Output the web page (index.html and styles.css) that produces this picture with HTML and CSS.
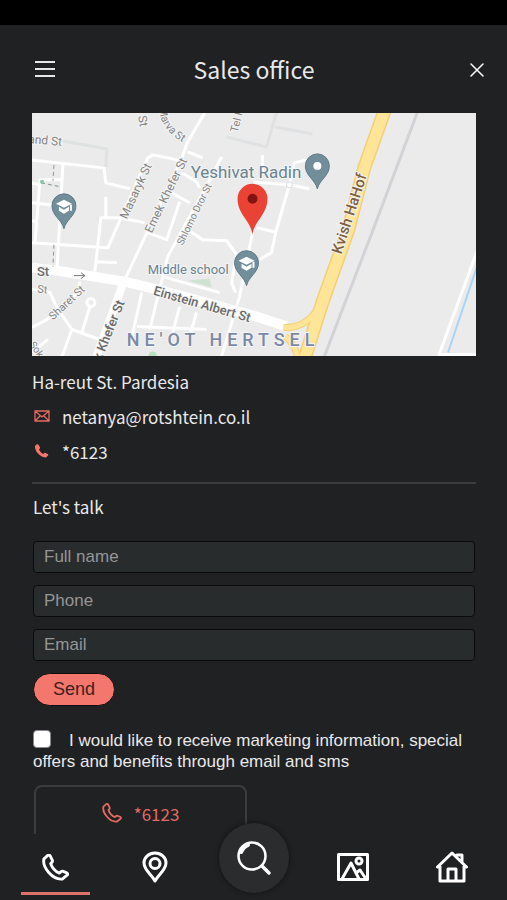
FILE: index.html
```html
<!DOCTYPE html>
<html lang="en">
<head>
  <meta charset="UTF-8" />
  <meta name="viewport" content="width=device-width, initial-scale=1.0"/>
  <title>Sales office</title>
  <link rel="stylesheet" href="styles.css">
</head>
<body>

  <div class="status-bar"></div>

  <header class="header">
    <button class="icon-btn" type="button" aria-label="Menu">
      <svg width="20" height="18" viewBox="0 0 20 18" fill="none" stroke="#e4e6e7" stroke-width="2"><path d="M0 2h20M0 9h20M0 16h20"/></svg>
    </button>
    <h1>Sales office</h1>
    <button class="icon-btn" type="button" aria-label="Close">
      <svg width="14" height="18" viewBox="0 0 14 18" fill="none" stroke="#fff" stroke-width="1.5" stroke-linecap="round"><path d="M1 4l12 12M13 4L1 16"/></svg>
    </button>
  </header>

  <main class="content">
    <!-- Map -->
    <svg class="map" viewBox="0 0 445 244" role="img" aria-label="Map of the sales office">
      <defs>
        <g id="pin"><path d="M0 23C-2 14-12 10-12 0a12 12 0 0 1 24 0C12 10 2 14 0 23z" fill="#718e9a" stroke="#5d7985"/></g>
        <g id="school">
          <use href="#pin"/>
          <path d="M-8-2L0-6 8-2 0 2z" fill="#fff"/>
          <path d="M-5 1v4l5 3 5-3V1L0 4zM6-1h2v6H6z" fill="#fff"/>
        </g>
        <path id="curve" d="M127 -5Q129 17 152 30"/>
      </defs>
      <rect width="445" height="244" fill="#ebebeb"/>
      <path d="M156 168l22-2 2 9z" fill="#cfe3d1"/>
      <circle cx="121" cy="243" r="4" fill="#b9e0bf"/>

      <g class="road-faint">
        <path d="M26 27l49 9-1 18M195 24l40 10L245 0M244 14l37 7"/>
      </g>
      <g class="road">
        <path d="M72 54l2 16 24 6M0 47l71 8M31 52l-6 105M0 70l8 2M30 67H8L3 130M0 90l28 3M0 108l4 1"/>
        <path d="M0 130l76 5 40-90 5-3 30 6M173 0l-17 29-7 19-56 119M156 39l15 6"/>
        <path d="M190 44l-9 18-45 82-18 73M150 60l15 9 3 6M138 79l20 11M148 89l-13 38-19-7"/>
        <path d="M63 159l6-54h19l25 5M74 84v20M65 149l20 1M156 117l15 10 24 1 10 14-5 28 4 10"/>
        <path d="M231 42v20M222 69l36 3 20 4M258 72l-13 45-5 23-12 7M258 72l5-22 12-3M225 115l18 4"/>
        <path d="M221 120l-13 64-18 60M131 164l57 16M110 180l-12 54M105 214l70 3M148 194l-7 26M165 200l-7 24"/>
        <path d="M48 169l-2 11-31 27-15 8M0 177l18 3 7 15 15 22 28 10M40 217l-10 27M50 220l8-26M0 240l16-13"/>
        <circle cx="59" cy="190" r="4"/>
        <path d="M450 128l-42 114h37"/>
      </g>
      <path d="M93 166l-29 80" class="road-wide"/>
      <path d="M0 155l25 3 68 11 37 9 95 26 30 10" class="road-main"/>
      <circle cx="258" cy="72" r="3" fill="#fff" stroke="#d8dadd"/>
      <path d="M22 52l-1 16M9 70l20 4M22 132l-1 22" fill="none" stroke="#86998e" stroke-dasharray="4 3"/>
      <circle cx="10" cy="69" r="2" fill="#7ccca5"/>
      <path d="M42 163h11M49 160l4 3-4 3" fill="none" stroke="#777"/>

      <path d="M386 0l-46 122-47 122" fill="none" stroke="#d2d3d6" stroke-width="3"/>
      <path d="M446 154l-29 86" fill="none" stroke="#a9d3fa" stroke-width="2"/>

      <g fill="none" stroke="#f5cf73">
        <path d="M252 215q23 1 35-20M254 224q10 8 13 24" stroke-width="7"/>
        <path d="M354-4l-21 59-16 62-26 73-19 60" stroke-width="14"/>
      </g>
      <g fill="none" stroke="#ffe597">
        <path d="M252 215q23 1 35-20M254 224q10 8 13 24" stroke-width="5"/>
        <path d="M354-4l-21 59-16 62-26 73-19 60" stroke-width="11"/>
      </g>

      <g class="street">
        <text x="-4" y="30" font-size="12" transform="rotate(5 -4 30)">and St</text>
        <text x="104" y="-9" font-size="12" transform="rotate(80 104 -9)">al St</text>
        <text font-size="11"><textPath href="#curve">Marva St</textPath></text>
        <text x="206" y="20" font-size="11" transform="rotate(-76 206 20)">Tel K</text>
        <text x="95" y="107" font-size="12" transform="rotate(-65 95 107)">Masaryk St</text>
        <text x="120" y="121" font-size="12" transform="rotate(-64 120 121)">Emek Khefer St</text>
        <text x="151" y="133" font-size="10" transform="rotate(-64 151 133)">Shlomo Dror St</text>
        <text x="21" y="208" font-size="11" transform="rotate(-43 21 208)">Sharet St</text>
        <text x="5" y="180" font-size="11" transform="rotate(5 5 180)">St</text>
        <text x="-3" y="232" font-size="10" transform="rotate(55 -3 232)">Sok</text>
      </g>
      <g class="street street-main">
        <text x="5" y="163" font-size="13">St</text>
        <text x="121" y="182" font-size="13" transform="rotate(16 121 182)">Einstein Albert St</text>
        <text x="93" y="190" font-size="13" text-anchor="end" transform="rotate(-68 93 190)">Emek Khefer St</text>
      </g>
      <text x="310" y="142" font-size="15" class="highway" transform="rotate(-72 310 142)">Kvish HaHof</text>
      <text x="159" y="65" font-size="17" class="place">Yeshivat Radin</text>
      <text x="116" y="161" font-size="13" class="place">Middle school</text>
      <text x="95" y="234" class="district">NE'OT HERTSEL</text>

      <use href="#school" x="32" y="93"/>
      <use href="#school" x="215" y="150"/>
      <use href="#pin" x="286" y="53"/>
      <circle cx="286" cy="53" r="4" fill="#fff"/>
      <path d="M221 122c-1-13-15-20-15-36a15 15 0 0 1 30 0c0 16-14 23-15 36z" fill="#ea4335"/>
      <circle cx="221" cy="86" r="5" fill="#811411"/>
    </svg>

    <!-- Contact details -->
    <address class="contact">
      <p>Ha-reut St. Pardesia</p>
      <a href="mailto:netanya@rotshtein.co.il">
        <svg width="16" height="16" viewBox="0 0 16 16" fill="none" stroke="#e36a61" stroke-width="1.3"><path d="M1 2h14v10H1zM1 2l7 6 7-6M1 12l5-5M15 12l-5-5"/></svg>
        netanya@rotshtein.co.il
      </a>
      <a href="tel:*6123">
        <svg width="16" height="16" viewBox="0 0 16 16"><path d="M2.500.5L1 2c-.5 5 5 11 11 11.500l2-2c.5-.5.3-1-.3-1.400L11.500 9c-.6-.3-1-.2-1.500.3l-.8.7C7.500 9 6 7.500 5 5.500l.8-1c.4-.4.4-.8.1-1.300L4.500.8C4 .1 3.200-.1 2.500.5z" fill="#f4776e"/></svg>
        *6123
      </a>
    </address>

    <!-- Contact form -->
    <form class="form">
      <h2>Let's talk</h2>
      <input class="field" type="text" placeholder="Full name" aria-label="Full name">
      <input class="field" type="tel" placeholder="Phone" aria-label="Phone">
      <input class="field" type="email" placeholder="Email" aria-label="Email">
      <button class="send" type="button">Send</button>
      <label class="consent" for="consent"><input type="checkbox" id="consent">I would like to receive marketing information, special offers and benefits through email and sms</label>
    </form>

    <a class="call" href="tel:*6123">
      <svg width="20" height="20" viewBox="0 0 28 28" fill="none" stroke="#e36a61" stroke-width="2.500" stroke-linejoin="round"><use href="#phone"/></svg>
      *6123
    </a>
  </main>

  <!-- Bottom navigation -->
  <nav class="nav">
    <a class="nav-item active" href="#contact" aria-label="Contact">
      <svg width="27" height="27" viewBox="0 0 28 28" fill="none" stroke="#fff" stroke-width="3" stroke-linejoin="round"><path id="phone" d="M6 1.500L2 5C0 14 11 27 21 26l5-4c1-1 .8-1.800-.2-2.400L22 18c-1-.5-1.800-.2-2.600.5l-1.400 1.300C14 18 10.500 14 9 10l1.300-1.500c.7-.8.8-1.500.2-2.500L8.500 2C8 1 7 .8 6 1.500z"/></svg>
    </a>
    <a class="nav-item" href="#location" aria-label="Location">
      <svg width="26" height="32" viewBox="0 0 26 32" fill="none" stroke="#fff" stroke-width="3" stroke-linejoin="round"><path d="M13 30C10 24 2 19 2 12a11 10 0 0 1 22 0c0 7-8 12-11 18z"/><circle cx="13" cy="12.500" r="5"/></svg>
    </a>
    <span class="nav-item"></span>
    <a class="nav-item" href="#gallery" aria-label="Gallery">
      <svg width="32" height="28" viewBox="0 0 32 28" fill="none" stroke="#fff" stroke-width="3" stroke-linejoin="round"><path d="M1.500 1.500h29v25h-29zM5 26l9-16 8 16M19 20l4-3 6 9"/><circle cx="22" cy="8" r="3"/></svg>
    </a>
    <a class="nav-item" href="#home" aria-label="Home">
      <svg width="32" height="32" viewBox="0 0 32 32" fill="none" stroke="#fff" stroke-width="3" stroke-linejoin="round" stroke-linecap="round"><path d="M1.500 16L16 2l14.500 14M4 15v15h24V15M12 30V18h8v12M21 4h5v7"/></svg>
    </a>
    <button class="search" type="button" aria-label="Search">
      <svg width="36" height="36" viewBox="0 0 36 36" fill="none" stroke="#fff" stroke-width="2.500" stroke-linecap="round"><circle cx="16" cy="16" r="13.500"/><path d="M26 26l7 7" stroke-width="3.500"/><path d="M5 12q3-6 7-7" stroke-width="4"/></svg>
    </button>
  </nav>

</body>
</html>
```
FILE: styles.css
```css
* {
  margin: 0;
  padding: 0;
  box-sizing: border-box;
}

body {
  display: flex;
  flex-direction: column;
  height: 100vh;
  background: #202123;
  color: #e9e9ea;
  font-family: "Noto Sans CJK SC", "Noto Sans", sans-serif;
  font-size: 17px;
}

a {
  color: inherit;
  text-decoration: none;
}

button {
  border: none;
  background: none;
  cursor: pointer;
}

svg {
  display: block;
}

/* Header */
.status-bar {
  flex: none;
  height: 25px;
  background: #000;
}

.header {
  flex: none;
  display: grid;
  grid-template-columns: 24px 1fr 24px;
  align-items: center;
  height: 88px;
  padding: 0 18px 0 33px;
}

.header h1 {
  font-size: 23px;
  font-weight: 400;
  line-height: 32px;
  text-align: center;
  padding-right: 14px;
}

.icon-btn {
  display: flex;
  justify-content: center;
  padding: 2px;
}

.content {
  flex: 1;
  min-height: 0;
  overflow-y: auto;
  scrollbar-width: none;
  padding: 0 31px 0 32px;
}

/* Map */
.map {
  width: 100%;
  height: auto;
  font-family: Roboto, sans-serif;
}

.map text {
  paint-order: stroke;
  stroke: #f4f4f4;
  stroke-width: 2px;
}

.road,
.road-faint,
.road-wide,
.road-main {
  fill: none;
  stroke: #fff;
  stroke-width: 3px;
  stroke-linejoin: round;
}

.road-faint {
  stroke: #dfe1e3;
}

.road-wide {
  stroke-width: 8px;
}

.road-main {
  stroke-width: 10px;
}

.street {
  fill: #858585;
}

.street-main {
  fill: #6b6b6b;
  font-weight: 500;
}

.highway {
  fill: #80603f;
  font-weight: 500;
}

.place {
  fill: #698391;
}

.map .district {
  fill: #7c89a5;
  font-size: 18px;
  font-weight: 500;
  letter-spacing: 5px;
}

/* Contact details */
.contact {
  padding: 8px 0 13px;
  border-bottom: 2px solid #3d3d40;
  font-style: normal;
  line-height: 35px;
}

.contact a {
  display: flex;
  align-items: center;
  gap: 12px;
  padding-left: 2px;
}

/* Form */
.form {
  display: flex;
  flex-direction: column;
  align-items: flex-start;
  gap: 12px;
  padding: 8px 1px 0;
  font-family: "Liberation Sans", sans-serif;
}

.form h2 {
  margin-bottom: 7px;
  font-family: "Noto Sans CJK SC", "Noto Sans", sans-serif;
  font-size: 17px;
  font-weight: 400;
  line-height: 30px;
}

.field {
  width: 100%;
  height: 32px;
  padding: 0 10px;
  border: 1px solid #090a0b;
  border-radius: 4px;
  background: #292c2d;
  color: #fff;
  font: 17px "Liberation Sans", sans-serif;
}

.field::placeholder {
  color: #949596;
}

.send {
  height: 33px;
  padding: 0 19px;
  border: 1px solid #0d0d0d;
  border-radius: 17px;
  background: #f4776e;
  color: #3c2220;
  font: 18px "Liberation Sans", sans-serif;
}

.consent {
  margin-top: 12px;
  line-height: 21px;
}

.consent input {
  appearance: none;
  width: 18px;
  height: 18px;
  margin-right: 18px;
  border: 1px solid #8a8a8c;
  border-radius: 4px;
  background: #fff;
  vertical-align: -2px;
}

/* Call button */
.call {
  display: flex;
  justify-content: center;
  align-items: center;
  gap: 12px;
  width: 48%;
  height: 56px;
  margin: 13px 2px 0;
  border: 2px solid #3b3c3e;
  border-radius: 8px;
  color: #e36a61;
}

/* Bottom navigation */
.nav {
  position: relative;
  flex: none;
  display: grid;
  grid-template-columns: repeat(5, 1fr);
  height: 66px;
  padding: 0 5px 0 6px;
  background: #202123;
}

.nav-item {
  display: flex;
  justify-content: center;
  align-items: center;
  margin: 0 15px 5px;
  padding-top: 8px;
  border-bottom: 3px solid transparent;
}

.nav-item.active {
  border-color: #dd736b;
}

.search {
  position: absolute;
  top: -11px;
  left: 50%;
  display: flex;
  justify-content: center;
  align-items: center;
  width: 70px;
  height: 70px;
  border-radius: 50%;
  background: #2a2c2e;
  box-shadow: 0 0 5px #111;
  transform: translateX(-50%);
}
```
